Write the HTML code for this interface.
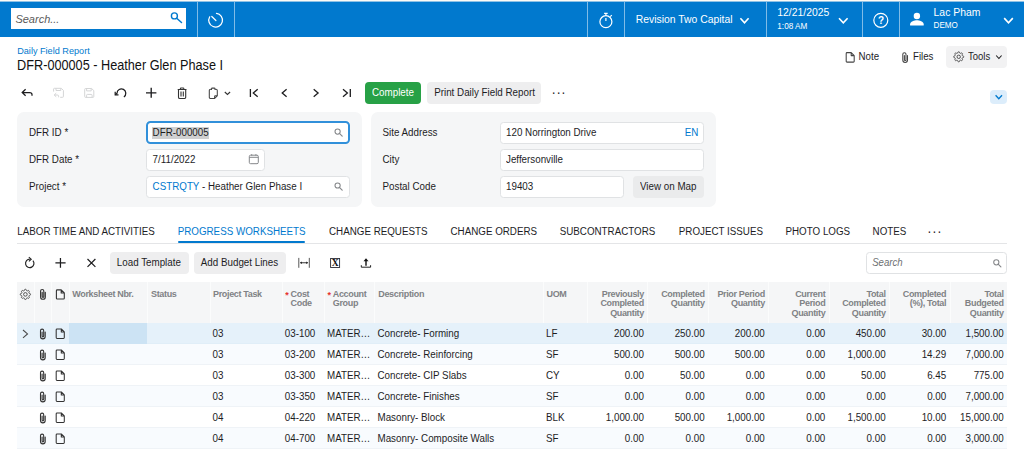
<!DOCTYPE html>
<html><head><meta charset="utf-8"><title>Daily Field Report</title>
<style>
*{box-sizing:border-box;margin:0;padding:0}
html,body{width:1024px;height:460px;overflow:hidden;background:#fff;font-family:"Liberation Sans",sans-serif;color:#1d1d1f;font-size:9.8px}
.abs{position:absolute}
.t{position:absolute;white-space:nowrap}
.hc{position:absolute;white-space:nowrap;font-weight:bold;font-size:9px;letter-spacing:-0.34px;color:#808285;line-height:9.5px}
.hr{text-align:right}
svg{position:absolute;overflow:visible}
</style></head><body>
<div class="abs" style="left:0.00px;top:0.00px;width:1024.00px;height:37.00px;background:linear-gradient(#fdfbf6 0,#fdfbf6 1px,#8fc2e6 1px,#8fc2e6 2px,#0179ce 2px)"></div>
<div class="abs" style="left:10.60px;top:8.00px;width:175.40px;height:21.00px;background:#fff"></div>
<div class="t" style="left:15.40px;top:13px;line-height:12px;font-size:11px;color:#5a5a5a;transform:scaleY(1.03);transform-origin:0 10px;font-style:italic">Search...</div>
<div class="abs" style="left:197.00px;top:2.00px;width:1.00px;height:35.00px;background:rgba(255,255,255,.5)"></div>
<div class="abs" style="left:234.00px;top:2.00px;width:1.00px;height:35.00px;background:rgba(255,255,255,.5)"></div>
<div class="abs" style="left:587.00px;top:2.00px;width:1.00px;height:35.00px;background:rgba(255,255,255,.5)"></div>
<div class="abs" style="left:624.00px;top:2.00px;width:1.00px;height:35.00px;background:rgba(255,255,255,.5)"></div>
<div class="abs" style="left:766.00px;top:2.00px;width:1.00px;height:35.00px;background:rgba(255,255,255,.5)"></div>
<div class="abs" style="left:862.00px;top:2.00px;width:1.00px;height:35.00px;background:rgba(255,255,255,.5)"></div>
<div class="abs" style="left:899.00px;top:2.00px;width:1.00px;height:35.00px;background:rgba(255,255,255,.5)"></div>
<svg style="left:0;top:0" width="1024" height="460" viewBox="0 0 1024 460"><circle cx="174.4" cy="15.9" r="3" fill="none" stroke="#0179ce" stroke-width="1.4"/><path d="M176.7 18.3L181.5 22.5" fill="none" stroke="#0179ce" stroke-width="1.5" stroke-linecap="round"/></svg>
<svg style="left:0;top:0" width="1024" height="460" viewBox="0 0 1024 460"><path d="M216.5 13.4A6.85 6.85 0 1 1 209.7 16.8" fill="none" stroke="#fff" stroke-width="1.25" stroke-linecap="round"/><path d="M215.9 20.5L211.8 16.5" fill="none" stroke="#fff" stroke-width="1.25" stroke-linecap="round"/></svg>
<svg style="left:0;top:0" width="1024" height="460" viewBox="0 0 1024 460"><circle cx="605.9" cy="21.7" r="6" fill="none" stroke="#fff" stroke-width="1.2"/><path d="M604.1 13.3h3.6M605.9 13.3v2.2M605.9 18v3M610.3 16.7l1.5-1.6" fill="none" stroke="#fff" stroke-width="1.2" /></svg>
<div class="t" style="left:635.70px;top:14px;line-height:11px;font-size:10.4px;color:#fff;transform:scaleY(1.03);transform-origin:0 9px;">Revision Two Capital</div>
<svg style="left:0;top:0" width="1024" height="460" viewBox="0 0 1024 460"><path d="M740.40 18.20L744.50 22.80L748.60 18.20" fill="none" stroke="#fff" stroke-width="1.6"/></svg>
<div class="t" style="left:777.30px;top:7px;line-height:11px;font-size:10.4px;color:#fff;transform:scaleY(1.03);transform-origin:0 9px;">12/21/2025</div>
<div class="t" style="left:777.30px;top:22px;line-height:9px;font-size:8.2px;color:#fff;transform:scaleY(1.07);transform-origin:0 7px;">1:08 AM</div>
<svg style="left:0;top:0" width="1024" height="460" viewBox="0 0 1024 460"><path d="M839.00 18.20L843.30 22.80L847.60 18.20" fill="none" stroke="#fff" stroke-width="1.6"/></svg>
<svg style="left:0;top:0" width="1024" height="460" viewBox="0 0 1024 460"><circle cx="880.8" cy="20.3" r="7" fill="none" stroke="#fff" stroke-width="1.2"/></svg>
<div class="t" style="left:877.90px;top:15px;line-height:11px;font-size:10px;color:#fff;font-weight:bold">?</div>
<svg style="left:0;top:0" width="1024" height="460" viewBox="0 0 1024 460"><circle cx="916.9" cy="16" r="3.2" fill="#fff"/><path d="M910.1 25.6v-1.4c0-2.6 4.5-3.9 6.8-3.9s6.8 1.3 6.8 3.9v1.4z" fill="#fff"/></svg>
<div class="t" style="left:933.60px;top:7px;line-height:11px;font-size:10.4px;color:#fff;transform:scaleY(1.03);transform-origin:0 9px;">Lac Pham</div>
<div class="t" style="left:933.60px;top:21px;line-height:9px;font-size:8.1px;color:#fff;transform:scaleY(1.07);transform-origin:0 7px;">DEMO</div>
<svg style="left:0;top:0" width="1024" height="460" viewBox="0 0 1024 460"><path d="M1004.20 18.10L1008.50 22.90L1012.80 18.10" fill="none" stroke="#fff" stroke-width="1.6"/></svg>
<div class="t" style="left:17.20px;top:46px;line-height:10px;font-size:9.15px;color:#0179ce;transform:scaleY(1.08);transform-origin:0 8px;">Daily Field Report</div>
<div class="t" style="left:17.10px;top:59px;line-height:14px;font-size:12.7px;color:#111;transform:scaleY(1.08);transform-origin:0 11px;">DFR-000005 - Heather Glen Phase I</div>
<div class="t" style="left:858.60px;top:51px;line-height:11px;font-size:9.7px;color:#1d1d1f;transform:scaleY(1.08);transform-origin:0 9px;">Note</div>
<div class="t" style="left:913.00px;top:51px;line-height:11px;font-size:9.7px;color:#1d1d1f;transform:scaleY(1.08);transform-origin:0 9px;">Files</div>
<div class="abs" style="left:946.40px;top:45.60px;width:60.70px;height:22.50px;background:#f2f2f3;border-radius:4px"></div>
<div class="t" style="left:968.00px;top:51px;line-height:11px;font-size:9.5px;color:#1d1d1f;transform:scaleY(1.08);transform-origin:0 9px;">Tools</div>
<svg style="left:0;top:0" width="1024" height="460" viewBox="0 0 1024 460"><path d="M996.20 55.50L998.90 58.50L1001.60 55.50" fill="none" stroke="#1d1d1f" stroke-width="1.1"/></svg>
<div class="abs" style="left:365.20px;top:81.60px;width:55.80px;height:22.30px;background:#27a146;border-radius:4px"></div>
<div class="t" style="left:372.00px;top:87px;line-height:11px;font-size:9.8px;color:#fff;transform:scaleY(1.08);transform-origin:0 9px;">Complete</div>
<div class="abs" style="left:426.60px;top:81.60px;width:114.90px;height:22.30px;background:#eeeeef;border-radius:4px"></div>
<div class="t" style="left:434.20px;top:87px;line-height:11px;font-size:9.8px;color:#1d1d1f;transform:scaleY(1.08);transform-origin:0 9px;">Print Daily Field Report</div>
<div class="abs" style="left:990.40px;top:90.00px;width:16.70px;height:13.80px;background:#dcedfb;border-radius:4px"></div>
<svg style="left:0;top:0" width="1024" height="460" viewBox="0 0 1024 460"><path d="M995.60 95.20L998.80 98.80L1002.00 95.20" fill="none" stroke="#0179ce" stroke-width="1.3"/></svg>
<svg style="left:0;top:0" width="1024" height="460" viewBox="0 0 1024 460"><path d="M25.6 89.3L22.2 92.5L25.6 95.7M22.4 92.5H29.6Q32 92.5 32 94.6V95.8" fill="none" stroke="#1d1d1f" stroke-width="1.25" /><path d="M53.6 91.6V89.1a0.8 0.8 0 0 1 0.8 -0.8H61.3L63.4 90.4V96.5a0.8 0.8 0 0 1 -0.8 0.8H60.2M56 88.4V90.5H60.8V88.4" fill="none" stroke="#d4d5d6" stroke-width="1.0" /><path d="M56.2 93.2L54.2 95L56.2 96.8M54.3 95H57.4Q58.6 95 58.6 96.2V97.3" fill="none" stroke="#d4d5d6" stroke-width="1.0" /><path d="M85.6 88.5H91.6L93.8 90.6V96.5a0.9 0.9 0 0 1 -0.9 0.9H85.6a0.9 0.9 0 0 1 -0.9 -0.9V89.4a0.9 0.9 0 0 1 0.9 -0.9ZM86.6 88.5V90.9H91.2V88.5M86.6 97.4V95.3a0.9 0.9 0 0 1 0.9 -0.9H91.2a0.9 0.9 0 0 1 0.9 0.9V97.4" fill="none" stroke="#d4d5d6" stroke-width="1.0" /><path d="M115.4 94.7L117 93.2A4.4 4.4 0 1 1 123.9 96.9" fill="none" stroke="#1d1d1f" stroke-width="1.25" /><path d="M115.2 91.7V94.9H118.5" fill="none" stroke="#1d1d1f" stroke-width="1.25" /><path d="M146 92.85H156.4M151.2 87.8V97.7" fill="none" stroke="#1d1d1f" stroke-width="1.35" /><path d="M177.7 89.5H186.5M180.4 89.3V88.6a0.6 0.6 0 0 1 0.6 -0.6H183.2a0.6 0.6 0 0 1 0.6 0.6V89.3M178.5 89.6V97.2a1.3 1.3 0 0 0 1.3 1.3H184.4a1.3 1.3 0 0 0 1.3 -1.3V89.6M181 91.4V96.4M183.3 91.4V96.4" fill="none" stroke="#333" stroke-width="1.1" /><path d="M211.6 89.3H210.6a1.3 1.3 0 0 0 -1.3 1.3V97.2a1.3 1.3 0 0 0 1.3 1.3H214.6L217.3 95.7V90.6a1.3 1.3 0 0 0 -1.3 -1.3H215M211.5 89.9V88.9a0.8 0.8 0 0 1 0.8 -0.8H214.2a0.8 0.8 0 0 1 0.8 0.8V89.9M214.6 98.4V96.6a0.8 0.8 0 0 1 0.8 -0.8H217.2" fill="none" stroke="#444" stroke-width="1.05" /><path d="M224.8 92L227.45 94.5L230.1 92" fill="none" stroke="#333" stroke-width="1.1" /><path d="M250.4 88.9V97.1M257.7 89.2L253.3 93L257.7 96.8" fill="none" stroke="#1d1d1f" stroke-width="1.3" /><path d="M286.6 89.2L282.2 93L286.6 96.8" fill="none" stroke="#1d1d1f" stroke-width="1.3" /><path d="M313.7 89.2L318.1 93L313.7 96.8" fill="none" stroke="#1d1d1f" stroke-width="1.3" /><path d="M343 89.2L347.4 93L343 96.8M350.3 88.9V97.1" fill="none" stroke="#1d1d1f" stroke-width="1.3" /><path d="M851.20 52.60H847.00a0.8 0.8 0 0 0 -0.8 0.8V61.30a0.8 0.8 0 0 0 0.8 0.8H853.40a0.8 0.8 0 0 0 0.8 -0.8V55.60ZM851.20 52.60V55.60H854.20" fill="none" stroke="#444" stroke-width="1.05" stroke-linejoin="round"/><path d="M907.50 55.60v4.5a2.35 2.35 0 0 1 -4.7 0v-5.8a1.6 1.6 0 0 1 3.2 0v5.4a0.8 0.8 0 0 1 -1.6 0v-4.1" fill="none" stroke="#444" stroke-width="1.05" stroke-linecap="round"/><path d="M963.70 56.80L963.68 57.13L963.55 57.44L963.02 57.66L962.47 57.81L962.31 58.03L962.21 58.25L962.12 58.49L962.08 58.75L962.36 59.24L962.58 59.78L962.45 60.09L962.24 60.34L961.99 60.55L961.68 60.68L961.14 60.46L960.65 60.18L960.39 60.22L960.15 60.31L959.93 60.41L959.71 60.57L959.56 61.12L959.34 61.65L959.03 61.78L958.70 61.80L958.37 61.78L958.06 61.65L957.84 61.12L957.69 60.57L957.47 60.41L957.25 60.31L957.01 60.22L956.75 60.18L956.26 60.46L955.72 60.68L955.41 60.55L955.16 60.34L954.95 60.09L954.82 59.78L955.04 59.24L955.32 58.75L955.28 58.49L955.19 58.25L955.09 58.03L954.93 57.81L954.38 57.66L953.85 57.44L953.72 57.13L953.70 56.80L953.72 56.47L953.85 56.16L954.38 55.94L954.93 55.79L955.09 55.57L955.19 55.35L955.28 55.11L955.32 54.85L955.04 54.36L954.82 53.82L954.95 53.51L955.16 53.26L955.41 53.05L955.72 52.92L956.26 53.14L956.75 53.42L957.01 53.38L957.25 53.29L957.47 53.19L957.69 53.03L957.84 52.48L958.06 51.95L958.37 51.82L958.70 51.80L959.03 51.82L959.34 51.95L959.56 52.48L959.71 53.03L959.93 53.19L960.15 53.29L960.39 53.38L960.65 53.42L961.14 53.14L961.68 52.92L961.99 53.05L962.24 53.26L962.45 53.51L962.58 53.82L962.36 54.36L962.08 54.85L962.12 55.11L962.21 55.35L962.31 55.57L962.47 55.79L963.02 55.94L963.55 56.16L963.68 56.47Z" fill="none" stroke="#4a4a4a" stroke-width="0.95" stroke-linejoin="round"/><circle cx="958.7" cy="56.8" r="1.7" fill="none" stroke="#4a4a4a" stroke-width="0.95"/></svg>

<div class="abs" style="left:17.00px;top:112.00px;width:345.00px;height:95.00px;background:#f5f6f7;border-radius:7px"></div>
<div class="abs" style="left:370.50px;top:112.00px;width:345.10px;height:95.00px;background:#f5f6f7;border-radius:7px"></div>
<div class="abs" style="left:145.90px;top:121.00px;width:204.60px;height:23.20px;background:#fff;border:2px solid #3190da;border-radius:4.5px"></div>
<div class="abs" style="left:146.20px;top:148.50px;width:119.30px;height:22.00px;background:#fff;border:1px solid #e0e2e4;border-radius:3.5px"></div>
<div class="abs" style="left:146.20px;top:175.50px;width:204.00px;height:22.00px;background:#fff;border:1px solid #e0e2e4;border-radius:3.5px"></div>
<div class="abs" style="left:499.60px;top:121.50px;width:204.00px;height:22.00px;background:#fff;border:1px solid #e0e2e4;border-radius:3.5px"></div>
<div class="abs" style="left:499.60px;top:148.50px;width:204.00px;height:22.00px;background:#fff;border:1px solid #e0e2e4;border-radius:3.5px"></div>
<div class="abs" style="left:499.60px;top:175.50px;width:124.70px;height:22.00px;background:#fff;border:1px solid #e0e2e4;border-radius:3.5px"></div>
<div class="abs" style="left:632.90px;top:175.50px;width:70.70px;height:22.00px;background:#eaebec;border-radius:4px"></div>
<div class="t" style="left:29.00px;top:127px;line-height:11px;font-size:9.8px;color:#1d1d1f;transform:scaleY(1.08);transform-origin:0 9px;">DFR ID *</div>
<div class="t" style="left:382.50px;top:127px;line-height:11px;font-size:9.8px;color:#1d1d1f;transform:scaleY(1.08);transform-origin:0 9px;">Site Address</div>
<div class="t" style="left:29.00px;top:154px;line-height:11px;font-size:9.8px;color:#1d1d1f;transform:scaleY(1.08);transform-origin:0 9px;">DFR Date *</div>
<div class="t" style="left:382.50px;top:154px;line-height:11px;font-size:9.8px;color:#1d1d1f;transform:scaleY(1.08);transform-origin:0 9px;">City</div>
<div class="t" style="left:29.00px;top:181px;line-height:11px;font-size:9.8px;color:#1d1d1f;transform:scaleY(1.08);transform-origin:0 9px;">Project *</div>
<div class="t" style="left:382.50px;top:181px;line-height:11px;font-size:9.8px;color:#1d1d1f;transform:scaleY(1.08);transform-origin:0 9px;">Postal Code</div>
<div class="abs" style="left:152.20px;top:126.80px;width:56.60px;height:12.00px;background:#cfd0d1"></div>
<div class="t" style="left:152.60px;top:127px;line-height:11px;font-size:9.8px;color:#1d1d1f;transform:scaleY(1.08);transform-origin:0 9px;">DFR-000005</div>
<div class="t" style="left:152.60px;top:154px;line-height:11px;font-size:9.8px;color:#1d1d1f;transform:scaleY(1.08);transform-origin:0 9px;">7/11/2022</div>
<div class="t" style="left:152.60px;top:181px;line-height:11px;font-size:9.8px;color:#1d1d1f;transform:scaleY(1.08);transform-origin:0 9px;"><span style="color:#0179ce">CSTRQTY</span> - Heather Glen Phase I</div>
<div class="t" style="left:506.00px;top:127px;line-height:11px;font-size:9.8px;color:#1d1d1f;transform:scaleY(1.08);transform-origin:0 9px;">120 Norrington Drive</div>
<div class="t" style="left:684.80px;top:127px;line-height:11px;font-size:9.8px;color:#0179ce;transform:scaleY(1.08);transform-origin:0 9px;">EN</div>
<div class="t" style="left:506.00px;top:154px;line-height:11px;font-size:9.8px;color:#1d1d1f;transform:scaleY(1.08);transform-origin:0 9px;">Jeffersonville</div>
<div class="t" style="left:506.00px;top:181px;line-height:11px;font-size:9.8px;color:#1d1d1f;transform:scaleY(1.08);transform-origin:0 9px;">19403</div>
<div class="t" style="left:640.00px;top:181px;line-height:11px;font-size:9.8px;color:#1d1d1f;transform:scaleY(1.08);transform-origin:0 9px;">View on Map</div>
<svg style="left:0;top:0" width="1024" height="460" viewBox="0 0 1024 460"><circle cx="337.6" cy="131.6" r="2.6" fill="none" stroke="#85878a" stroke-width="1.05"/><path d="M339.44 133.44L342.20 136.20" fill="none" stroke="#85878a" stroke-width="1.1500000000000001" stroke-linecap="round"/><circle cx="337.6" cy="185.5" r="2.6" fill="none" stroke="#85878a" stroke-width="1.05"/><path d="M339.44 187.34L342.20 190.10" fill="none" stroke="#85878a" stroke-width="1.1500000000000001" stroke-linecap="round"/><path d="M250.6 155.2H257a1.3 1.3 0 0 1 1.3 1.3V162.4a1.3 1.3 0 0 1 -1.3 1.3H250.6a1.3 1.3 0 0 1 -1.3 -1.3V156.5a1.3 1.3 0 0 1 1.3 -1.3ZM249.3 157.3H258.3M251.7 154.2V155.6M255.9 154.2V155.6" fill="none" stroke="#85878a" stroke-width="1.0" /></svg>

<div class="t" style="left:17.30px;top:226px;line-height:11px;font-size:9.8px;color:#1d1d1f;transform:scaleY(1.08);transform-origin:0 9px;">LABOR TIME AND ACTIVITIES</div>
<div class="t" style="left:177.70px;top:226px;line-height:11px;font-size:9.8px;color:#0179ce;transform:scaleY(1.08);transform-origin:0 9px;">PROGRESS WORKSHEETS</div>
<div class="t" style="left:329.00px;top:226px;line-height:11px;font-size:9.8px;color:#1d1d1f;transform:scaleY(1.08);transform-origin:0 9px;">CHANGE REQUESTS</div>
<div class="t" style="left:450.50px;top:226px;line-height:11px;font-size:9.8px;color:#1d1d1f;transform:scaleY(1.08);transform-origin:0 9px;">CHANGE ORDERS</div>
<div class="t" style="left:559.70px;top:226px;line-height:11px;font-size:9.8px;color:#1d1d1f;transform:scaleY(1.08);transform-origin:0 9px;">SUBCONTRACTORS</div>
<div class="t" style="left:678.80px;top:226px;line-height:11px;font-size:9.8px;color:#1d1d1f;transform:scaleY(1.08);transform-origin:0 9px;">PROJECT ISSUES</div>
<div class="t" style="left:785.50px;top:226px;line-height:11px;font-size:9.8px;color:#1d1d1f;transform:scaleY(1.08);transform-origin:0 9px;">PHOTO LOGS</div>
<div class="t" style="left:872.60px;top:226px;line-height:11px;font-size:9.8px;color:#1d1d1f;transform:scaleY(1.08);transform-origin:0 9px;">NOTES</div>
<div class="t" style="left:927.30px;top:224px;line-height:15px;font-size:13px;color:#1d1d1f;transform:scaleY(1.08);transform-origin:0 12px;letter-spacing:0.6px">···</div>
<div class="t" style="left:551.50px;top:85px;line-height:15px;font-size:13px;color:#1d1d1f;transform:scaleY(1.08);transform-origin:0 12px;letter-spacing:0.6px">···</div>
<div class="abs" style="left:17.00px;top:243.00px;width:990.00px;height:1.00px;background:#e4e5e7"></div>
<div class="abs" style="left:177.70px;top:241.00px;width:127.80px;height:2.20px;background:#0179ce;border-radius:1px"></div>
<div class="abs" style="left:109.60px;top:251.50px;width:79.00px;height:22.50px;background:#eeeeef;border-radius:4px"></div>
<div class="t" style="left:116.80px;top:257px;line-height:11px;font-size:9.8px;color:#1d1d1f;transform:scaleY(1.08);transform-origin:0 9px;">Load Template</div>
<div class="abs" style="left:193.60px;top:251.50px;width:92.00px;height:22.50px;background:#eeeeef;border-radius:4px"></div>
<div class="t" style="left:200.80px;top:257px;line-height:11px;font-size:9.8px;color:#1d1d1f;transform:scaleY(1.08);transform-origin:0 9px;">Add Budget Lines</div>
<div class="abs" style="left:866.20px;top:251.60px;width:140.40px;height:22.40px;background:#fff;border:1px solid #e0e2e4;border-radius:3.5px"></div>
<div class="t" style="left:872.20px;top:257px;line-height:11px;font-size:9.6px;color:#6d6f72;transform:scaleY(1.08);transform-origin:0 9px;font-style:italic">Search</div>
<svg style="left:0;top:0" width="1024" height="460" viewBox="0 0 1024 460"><path d="M32.9 260.6A4.2 4.2 0 1 1 29.9 259.2" fill="none" stroke="#222" stroke-width="1.15" /><path d="M28.8 257.2L31.2 259.2L28.9 261.3" fill="none" stroke="#222" stroke-width="1.1" /><path d="M55.4 262.9H65.6M60.45 258.1V267.8" fill="none" stroke="#1d1d1f" stroke-width="1.25" /><path d="M87.5 259L95.4 266.9M95.4 259L87.5 266.9" fill="none" stroke="#1d1d1f" stroke-width="1.2" /><path d="M298.8 257.9V267.8M309.3 257.9V267.8" fill="none" stroke="#444" stroke-width="0.9" /><path d="M300.4 262.75H307.7" fill="none" stroke="#222" stroke-width="0.9" /><path d="M299.9 262.75L301.9 261.4V264.1ZM308.2 262.75L306.2 261.4V264.1Z" fill="#222" stroke="none" stroke-width="0" /><rect x="330.6" y="258.5" width="9" height="9" fill="#fff" stroke="#2a2a33" stroke-width="0.9"/><path d="M366 260.5V265.8" fill="none" stroke="#111" stroke-width="1.4" /><path d="M366 258.2L368.5 261.3H363.5Z" fill="#111" stroke="none" stroke-width="0" /><path d="M361.3 265.2V267.2H370.6V265.2" fill="none" stroke="#222" stroke-width="1.0" /><circle cx="996.3" cy="262.3" r="2.6" fill="none" stroke="#85878a" stroke-width="1.05"/><path d="M998.14 264.14L1000.90 266.90" fill="none" stroke="#85878a" stroke-width="1.1500000000000001" stroke-linecap="round"/></svg>

<div class="t" style="left:331.65px;top:257px;line-height:11px;font-size:9.6px;color:#111;font-family:'Liberation Serif',serif;font-weight:bold">X</div>
<div class="abs" style="left:17.00px;top:282.20px;width:990.00px;height:40.80px;background:#f5f6f7"></div>
<div class="abs" style="left:33.60px;top:282.20px;width:1.00px;height:40.80px;background:#fbfcfc"></div>
<div class="abs" style="left:51.00px;top:282.20px;width:1.00px;height:40.80px;background:#fbfcfc"></div>
<div class="abs" style="left:68.80px;top:282.20px;width:1.00px;height:40.80px;background:#fbfcfc"></div>
<div class="abs" style="left:147.00px;top:282.20px;width:1.00px;height:40.80px;background:#fbfcfc"></div>
<div class="abs" style="left:210.00px;top:282.20px;width:1.00px;height:40.80px;background:#fbfcfc"></div>
<div class="abs" style="left:282.40px;top:282.20px;width:1.00px;height:40.80px;background:#fbfcfc"></div>
<div class="abs" style="left:323.80px;top:282.20px;width:1.00px;height:40.80px;background:#fbfcfc"></div>
<div class="abs" style="left:374.30px;top:282.20px;width:1.00px;height:40.80px;background:#fbfcfc"></div>
<div class="abs" style="left:543.00px;top:282.20px;width:1.00px;height:40.80px;background:#fbfcfc"></div>
<div class="abs" style="left:587.00px;top:282.20px;width:1.00px;height:40.80px;background:#fbfcfc"></div>
<div class="abs" style="left:647.00px;top:282.20px;width:1.00px;height:40.80px;background:#fbfcfc"></div>
<div class="abs" style="left:708.00px;top:282.20px;width:1.00px;height:40.80px;background:#fbfcfc"></div>
<div class="abs" style="left:768.00px;top:282.20px;width:1.00px;height:40.80px;background:#fbfcfc"></div>
<div class="abs" style="left:828.60px;top:282.20px;width:1.00px;height:40.80px;background:#fbfcfc"></div>
<div class="abs" style="left:889.00px;top:282.20px;width:1.00px;height:40.80px;background:#fbfcfc"></div>
<div class="abs" style="left:949.60px;top:282.20px;width:1.00px;height:40.80px;background:#fbfcfc"></div>
<div class="hc" style="left:72.30px;top:289.90px">Worksheet Nbr.</div>
<div class="hc" style="left:151.00px;top:289.90px">Status</div>
<div class="hc" style="left:213.00px;top:289.90px">Project Task</div>
<div class="hc" style="left:290.60px;top:289.90px">Cost<br>Code</div>
<div class="hc" style="left:332.80px;top:289.90px">Account<br>Group</div>
<div class="hc" style="left:378.30px;top:289.90px">Description</div>
<div class="hc" style="left:546.50px;top:289.90px">UOM</div>
<div class="t" style="left:285.30px;top:290px;line-height:10px;font-size:9px;color:#e5322d;transform:scaleY(1.08);transform-origin:0 8px;font-weight:bold">*</div>
<div class="t" style="left:327.40px;top:290px;line-height:10px;font-size:9px;color:#e5322d;transform:scaleY(1.08);transform-origin:0 8px;font-weight:bold">*</div>
<div class="hc hr" style="right:380.10px;top:289.90px">Previously<br>Completed<br>Quantity</div>
<div class="hc hr" style="right:319.40px;top:289.90px">Completed<br>Quantity</div>
<div class="hc hr" style="right:259.20px;top:289.90px">Prior Period<br>Quantity</div>
<div class="hc hr" style="right:198.70px;top:289.90px">Current<br>Period<br>Quantity</div>
<div class="hc hr" style="right:138.40px;top:289.90px">Total<br>Completed<br>Quantity</div>
<div class="hc hr" style="right:77.80px;top:289.90px">Completed<br>(%), Total</div>
<div class="hc hr" style="right:20.40px;top:289.90px">Total<br>Budgeted<br>Quantity</div>
<div class="abs" style="left:17.00px;top:323.00px;width:990.00px;height:21.00px;background:#e5f1fa;border-bottom:1px solid #e0eef8"></div>
<div class="abs" style="left:69.30px;top:323.00px;width:77.70px;height:20.50px;background:#cce3f4"></div>
<div class="t" style="left:212.50px;top:328px;line-height:11px;font-size:9.8px;color:#1d1d1f;transform:scaleY(1.08);transform-origin:0 9px;">03</div>
<div class="t" style="left:284.80px;top:328px;line-height:11px;font-size:9.8px;color:#1d1d1f;transform:scaleY(1.08);transform-origin:0 9px;">03-100</div>
<div class="t" style="left:327.00px;top:328px;line-height:11px;font-size:9.8px;color:#1d1d1f;transform:scaleY(1.08);transform-origin:0 9px;">MATER…</div>
<div class="t" style="left:377.50px;top:328px;line-height:11px;font-size:9.8px;color:#1d1d1f;transform:scaleY(1.08);transform-origin:0 9px;">Concrete- Forming</div>
<div class="t" style="left:546.00px;top:328px;line-height:11px;font-size:9.8px;color:#1d1d1f;transform:scaleY(1.08);transform-origin:0 9px;">LF</div>
<div class="t" style="right:380.10px;top:328px;line-height:11px;font-size:9.8px;color:#1d1d1f;transform:scaleY(1.08);transform-origin:0 9px;">200.00</div>
<div class="t" style="right:319.40px;top:328px;line-height:11px;font-size:9.8px;color:#1d1d1f;transform:scaleY(1.08);transform-origin:0 9px;">250.00</div>
<div class="t" style="right:259.20px;top:328px;line-height:11px;font-size:9.8px;color:#1d1d1f;transform:scaleY(1.08);transform-origin:0 9px;">200.00</div>
<div class="t" style="right:198.70px;top:328px;line-height:11px;font-size:9.8px;color:#1d1d1f;transform:scaleY(1.08);transform-origin:0 9px;">0.00</div>
<div class="t" style="right:138.40px;top:328px;line-height:11px;font-size:9.8px;color:#1d1d1f;transform:scaleY(1.08);transform-origin:0 9px;">450.00</div>
<div class="t" style="right:77.80px;top:328px;line-height:11px;font-size:9.8px;color:#1d1d1f;transform:scaleY(1.08);transform-origin:0 9px;">30.00</div>
<div class="t" style="right:20.40px;top:328px;line-height:11px;font-size:9.8px;color:#1d1d1f;transform:scaleY(1.08);transform-origin:0 9px;">1,500.00</div>
<div class="abs" style="left:17.00px;top:344.00px;width:990.00px;height:21.00px;background:#f8fbfe;border-bottom:1px solid #eff3f7"></div>
<div class="t" style="left:212.50px;top:349px;line-height:11px;font-size:9.8px;color:#1d1d1f;transform:scaleY(1.08);transform-origin:0 9px;">03</div>
<div class="t" style="left:284.80px;top:349px;line-height:11px;font-size:9.8px;color:#1d1d1f;transform:scaleY(1.08);transform-origin:0 9px;">03-200</div>
<div class="t" style="left:327.00px;top:349px;line-height:11px;font-size:9.8px;color:#1d1d1f;transform:scaleY(1.08);transform-origin:0 9px;">MATER…</div>
<div class="t" style="left:377.50px;top:349px;line-height:11px;font-size:9.8px;color:#1d1d1f;transform:scaleY(1.08);transform-origin:0 9px;">Concrete- Reinforcing</div>
<div class="t" style="left:546.00px;top:349px;line-height:11px;font-size:9.8px;color:#1d1d1f;transform:scaleY(1.08);transform-origin:0 9px;">SF</div>
<div class="t" style="right:380.10px;top:349px;line-height:11px;font-size:9.8px;color:#1d1d1f;transform:scaleY(1.08);transform-origin:0 9px;">500.00</div>
<div class="t" style="right:319.40px;top:349px;line-height:11px;font-size:9.8px;color:#1d1d1f;transform:scaleY(1.08);transform-origin:0 9px;">500.00</div>
<div class="t" style="right:259.20px;top:349px;line-height:11px;font-size:9.8px;color:#1d1d1f;transform:scaleY(1.08);transform-origin:0 9px;">500.00</div>
<div class="t" style="right:198.70px;top:349px;line-height:11px;font-size:9.8px;color:#1d1d1f;transform:scaleY(1.08);transform-origin:0 9px;">0.00</div>
<div class="t" style="right:138.40px;top:349px;line-height:11px;font-size:9.8px;color:#1d1d1f;transform:scaleY(1.08);transform-origin:0 9px;">1,000.00</div>
<div class="t" style="right:77.80px;top:349px;line-height:11px;font-size:9.8px;color:#1d1d1f;transform:scaleY(1.08);transform-origin:0 9px;">14.29</div>
<div class="t" style="right:20.40px;top:349px;line-height:11px;font-size:9.8px;color:#1d1d1f;transform:scaleY(1.08);transform-origin:0 9px;">7,000.00</div>
<div class="abs" style="left:17.00px;top:365.00px;width:990.00px;height:21.00px;background:#fff;border-bottom:1px solid #eff3f7"></div>
<div class="t" style="left:212.50px;top:370px;line-height:11px;font-size:9.8px;color:#1d1d1f;transform:scaleY(1.08);transform-origin:0 9px;">03</div>
<div class="t" style="left:284.80px;top:370px;line-height:11px;font-size:9.8px;color:#1d1d1f;transform:scaleY(1.08);transform-origin:0 9px;">03-300</div>
<div class="t" style="left:327.00px;top:370px;line-height:11px;font-size:9.8px;color:#1d1d1f;transform:scaleY(1.08);transform-origin:0 9px;">MATER…</div>
<div class="t" style="left:377.50px;top:370px;line-height:11px;font-size:9.8px;color:#1d1d1f;transform:scaleY(1.08);transform-origin:0 9px;">Concrete- CIP Slabs</div>
<div class="t" style="left:546.00px;top:370px;line-height:11px;font-size:9.8px;color:#1d1d1f;transform:scaleY(1.08);transform-origin:0 9px;">CY</div>
<div class="t" style="right:380.10px;top:370px;line-height:11px;font-size:9.8px;color:#1d1d1f;transform:scaleY(1.08);transform-origin:0 9px;">0.00</div>
<div class="t" style="right:319.40px;top:370px;line-height:11px;font-size:9.8px;color:#1d1d1f;transform:scaleY(1.08);transform-origin:0 9px;">50.00</div>
<div class="t" style="right:259.20px;top:370px;line-height:11px;font-size:9.8px;color:#1d1d1f;transform:scaleY(1.08);transform-origin:0 9px;">0.00</div>
<div class="t" style="right:198.70px;top:370px;line-height:11px;font-size:9.8px;color:#1d1d1f;transform:scaleY(1.08);transform-origin:0 9px;">0.00</div>
<div class="t" style="right:138.40px;top:370px;line-height:11px;font-size:9.8px;color:#1d1d1f;transform:scaleY(1.08);transform-origin:0 9px;">50.00</div>
<div class="t" style="right:77.80px;top:370px;line-height:11px;font-size:9.8px;color:#1d1d1f;transform:scaleY(1.08);transform-origin:0 9px;">6.45</div>
<div class="t" style="right:20.40px;top:370px;line-height:11px;font-size:9.8px;color:#1d1d1f;transform:scaleY(1.08);transform-origin:0 9px;">775.00</div>
<div class="abs" style="left:17.00px;top:386.00px;width:990.00px;height:21.00px;background:#f8fbfe;border-bottom:1px solid #eff3f7"></div>
<div class="t" style="left:212.50px;top:391px;line-height:11px;font-size:9.8px;color:#1d1d1f;transform:scaleY(1.08);transform-origin:0 9px;">03</div>
<div class="t" style="left:284.80px;top:391px;line-height:11px;font-size:9.8px;color:#1d1d1f;transform:scaleY(1.08);transform-origin:0 9px;">03-350</div>
<div class="t" style="left:327.00px;top:391px;line-height:11px;font-size:9.8px;color:#1d1d1f;transform:scaleY(1.08);transform-origin:0 9px;">MATER…</div>
<div class="t" style="left:377.50px;top:391px;line-height:11px;font-size:9.8px;color:#1d1d1f;transform:scaleY(1.08);transform-origin:0 9px;">Concrete- Finishes</div>
<div class="t" style="left:546.00px;top:391px;line-height:11px;font-size:9.8px;color:#1d1d1f;transform:scaleY(1.08);transform-origin:0 9px;">SF</div>
<div class="t" style="right:380.10px;top:391px;line-height:11px;font-size:9.8px;color:#1d1d1f;transform:scaleY(1.08);transform-origin:0 9px;">0.00</div>
<div class="t" style="right:319.40px;top:391px;line-height:11px;font-size:9.8px;color:#1d1d1f;transform:scaleY(1.08);transform-origin:0 9px;">0.00</div>
<div class="t" style="right:259.20px;top:391px;line-height:11px;font-size:9.8px;color:#1d1d1f;transform:scaleY(1.08);transform-origin:0 9px;">0.00</div>
<div class="t" style="right:198.70px;top:391px;line-height:11px;font-size:9.8px;color:#1d1d1f;transform:scaleY(1.08);transform-origin:0 9px;">0.00</div>
<div class="t" style="right:138.40px;top:391px;line-height:11px;font-size:9.8px;color:#1d1d1f;transform:scaleY(1.08);transform-origin:0 9px;">0.00</div>
<div class="t" style="right:77.80px;top:391px;line-height:11px;font-size:9.8px;color:#1d1d1f;transform:scaleY(1.08);transform-origin:0 9px;">0.00</div>
<div class="t" style="right:20.40px;top:391px;line-height:11px;font-size:9.8px;color:#1d1d1f;transform:scaleY(1.08);transform-origin:0 9px;">7,000.00</div>
<div class="abs" style="left:17.00px;top:407.00px;width:990.00px;height:21.00px;background:#fff;border-bottom:1px solid #eff3f7"></div>
<div class="t" style="left:212.50px;top:412px;line-height:11px;font-size:9.8px;color:#1d1d1f;transform:scaleY(1.08);transform-origin:0 9px;">04</div>
<div class="t" style="left:284.80px;top:412px;line-height:11px;font-size:9.8px;color:#1d1d1f;transform:scaleY(1.08);transform-origin:0 9px;">04-220</div>
<div class="t" style="left:327.00px;top:412px;line-height:11px;font-size:9.8px;color:#1d1d1f;transform:scaleY(1.08);transform-origin:0 9px;">MATER…</div>
<div class="t" style="left:377.50px;top:412px;line-height:11px;font-size:9.8px;color:#1d1d1f;transform:scaleY(1.08);transform-origin:0 9px;">Masonry- Block</div>
<div class="t" style="left:546.00px;top:412px;line-height:11px;font-size:9.8px;color:#1d1d1f;transform:scaleY(1.08);transform-origin:0 9px;">BLK</div>
<div class="t" style="right:380.10px;top:412px;line-height:11px;font-size:9.8px;color:#1d1d1f;transform:scaleY(1.08);transform-origin:0 9px;">1,000.00</div>
<div class="t" style="right:319.40px;top:412px;line-height:11px;font-size:9.8px;color:#1d1d1f;transform:scaleY(1.08);transform-origin:0 9px;">500.00</div>
<div class="t" style="right:259.20px;top:412px;line-height:11px;font-size:9.8px;color:#1d1d1f;transform:scaleY(1.08);transform-origin:0 9px;">1,000.00</div>
<div class="t" style="right:198.70px;top:412px;line-height:11px;font-size:9.8px;color:#1d1d1f;transform:scaleY(1.08);transform-origin:0 9px;">0.00</div>
<div class="t" style="right:138.40px;top:412px;line-height:11px;font-size:9.8px;color:#1d1d1f;transform:scaleY(1.08);transform-origin:0 9px;">1,500.00</div>
<div class="t" style="right:77.80px;top:412px;line-height:11px;font-size:9.8px;color:#1d1d1f;transform:scaleY(1.08);transform-origin:0 9px;">10.00</div>
<div class="t" style="right:20.40px;top:412px;line-height:11px;font-size:9.8px;color:#1d1d1f;transform:scaleY(1.08);transform-origin:0 9px;">15,000.00</div>
<div class="abs" style="left:17.00px;top:428.00px;width:990.00px;height:21.00px;background:#f8fbfe;border-bottom:1px solid #eff3f7"></div>
<div class="t" style="left:212.50px;top:433px;line-height:11px;font-size:9.8px;color:#1d1d1f;transform:scaleY(1.08);transform-origin:0 9px;">04</div>
<div class="t" style="left:284.80px;top:433px;line-height:11px;font-size:9.8px;color:#1d1d1f;transform:scaleY(1.08);transform-origin:0 9px;">04-700</div>
<div class="t" style="left:327.00px;top:433px;line-height:11px;font-size:9.8px;color:#1d1d1f;transform:scaleY(1.08);transform-origin:0 9px;">MATER…</div>
<div class="t" style="left:377.50px;top:433px;line-height:11px;font-size:9.8px;color:#1d1d1f;transform:scaleY(1.08);transform-origin:0 9px;">Masonry- Composite Walls</div>
<div class="t" style="left:546.00px;top:433px;line-height:11px;font-size:9.8px;color:#1d1d1f;transform:scaleY(1.08);transform-origin:0 9px;">SF</div>
<div class="t" style="right:380.10px;top:433px;line-height:11px;font-size:9.8px;color:#1d1d1f;transform:scaleY(1.08);transform-origin:0 9px;">0.00</div>
<div class="t" style="right:319.40px;top:433px;line-height:11px;font-size:9.8px;color:#1d1d1f;transform:scaleY(1.08);transform-origin:0 9px;">0.00</div>
<div class="t" style="right:259.20px;top:433px;line-height:11px;font-size:9.8px;color:#1d1d1f;transform:scaleY(1.08);transform-origin:0 9px;">0.00</div>
<div class="t" style="right:198.70px;top:433px;line-height:11px;font-size:9.8px;color:#1d1d1f;transform:scaleY(1.08);transform-origin:0 9px;">0.00</div>
<div class="t" style="right:138.40px;top:433px;line-height:11px;font-size:9.8px;color:#1d1d1f;transform:scaleY(1.08);transform-origin:0 9px;">0.00</div>
<div class="t" style="right:77.80px;top:433px;line-height:11px;font-size:9.8px;color:#1d1d1f;transform:scaleY(1.08);transform-origin:0 9px;">0.00</div>
<div class="t" style="right:20.40px;top:433px;line-height:11px;font-size:9.8px;color:#1d1d1f;transform:scaleY(1.08);transform-origin:0 9px;">3,000.00</div>
<svg style="left:0;top:0" width="1024" height="460" viewBox="0 0 1024 460"><path d="M30.50 294.40L30.48 294.73L30.35 295.05L29.81 295.28L29.27 295.44L29.10 295.66L29.00 295.89L28.91 296.13L28.87 296.40L29.14 296.90L29.36 297.44L29.23 297.75L29.01 298.01L28.75 298.23L28.44 298.36L27.90 298.14L27.40 297.87L27.13 297.91L26.89 298.00L26.66 298.10L26.44 298.27L26.28 298.81L26.05 299.35L25.73 299.48L25.40 299.50L25.07 299.48L24.75 299.35L24.52 298.81L24.36 298.27L24.14 298.10L23.91 298.00L23.67 297.91L23.40 297.87L22.90 298.14L22.36 298.36L22.05 298.23L21.79 298.01L21.57 297.75L21.44 297.44L21.66 296.90L21.93 296.40L21.89 296.13L21.80 295.89L21.70 295.66L21.53 295.44L20.99 295.28L20.45 295.05L20.32 294.73L20.30 294.40L20.32 294.07L20.45 293.75L20.99 293.52L21.53 293.36L21.70 293.14L21.80 292.91L21.89 292.67L21.93 292.40L21.66 291.90L21.44 291.36L21.57 291.05L21.79 290.79L22.05 290.57L22.36 290.44L22.90 290.66L23.40 290.93L23.67 290.89L23.91 290.80L24.14 290.70L24.36 290.53L24.52 289.99L24.75 289.45L25.07 289.32L25.40 289.30L25.73 289.32L26.05 289.45L26.28 289.99L26.44 290.53L26.66 290.70L26.89 290.80L27.13 290.89L27.40 290.93L27.90 290.66L28.44 290.44L28.75 290.57L29.01 290.79L29.23 291.05L29.36 291.36L29.14 291.90L28.87 292.40L28.91 292.67L29.00 292.91L29.10 293.14L29.27 293.36L29.81 293.52L30.35 293.75L30.48 294.07Z" fill="none" stroke="#4a4a4a" stroke-width="0.95" stroke-linejoin="round"/><circle cx="25.4" cy="294.4" r="1.8" fill="none" stroke="#4a4a4a" stroke-width="0.95"/><path d="M45.30 292.40v4.5a2.35 2.35 0 0 1 -4.7 0v-5.8a1.6 1.6 0 0 1 3.2 0v5.4a0.8 0.8 0 0 1 -1.6 0v-4.1" fill="none" stroke="#333" stroke-width="1.15" stroke-linecap="round"/><path d="M61.20 289.90H57.20a0.8 0.8 0 0 0 -0.8 0.8V298.20a0.8 0.8 0 0 0 0.8 0.8H63.50a0.8 0.8 0 0 0 0.8 -0.8V293.00ZM61.20 289.90V293.00H64.30" fill="none" stroke="#333" stroke-width="1.1" stroke-linejoin="round"/><path d="M23 330L27.5 333.9L23 337.8" fill="none" stroke="#4a4a4a" stroke-width="1.1" /><path d="M45.20 332.00v4.5a2.35 2.35 0 0 1 -4.7 0v-5.8a1.6 1.6 0 0 1 3.2 0v5.4a0.8 0.8 0 0 1 -1.6 0v-4.1" fill="none" stroke="#333" stroke-width="1.1" stroke-linecap="round"/><path d="M61.30 328.90H57.00a0.8 0.8 0 0 0 -0.8 0.8V337.60a0.8 0.8 0 0 0 0.8 0.8H63.50a0.8 0.8 0 0 0 0.8 -0.8V331.90ZM61.30 328.90V331.90H64.30" fill="none" stroke="#333" stroke-width="1.05" stroke-linejoin="round"/><path d="M45.20 353.00v4.5a2.35 2.35 0 0 1 -4.7 0v-5.8a1.6 1.6 0 0 1 3.2 0v5.4a0.8 0.8 0 0 1 -1.6 0v-4.1" fill="none" stroke="#333" stroke-width="1.1" stroke-linecap="round"/><path d="M61.30 349.90H57.00a0.8 0.8 0 0 0 -0.8 0.8V358.60a0.8 0.8 0 0 0 0.8 0.8H63.50a0.8 0.8 0 0 0 0.8 -0.8V352.90ZM61.30 349.90V352.90H64.30" fill="none" stroke="#333" stroke-width="1.05" stroke-linejoin="round"/><path d="M45.20 374.00v4.5a2.35 2.35 0 0 1 -4.7 0v-5.8a1.6 1.6 0 0 1 3.2 0v5.4a0.8 0.8 0 0 1 -1.6 0v-4.1" fill="none" stroke="#333" stroke-width="1.1" stroke-linecap="round"/><path d="M61.30 370.90H57.00a0.8 0.8 0 0 0 -0.8 0.8V379.60a0.8 0.8 0 0 0 0.8 0.8H63.50a0.8 0.8 0 0 0 0.8 -0.8V373.90ZM61.30 370.90V373.90H64.30" fill="none" stroke="#333" stroke-width="1.05" stroke-linejoin="round"/><path d="M45.20 395.00v4.5a2.35 2.35 0 0 1 -4.7 0v-5.8a1.6 1.6 0 0 1 3.2 0v5.4a0.8 0.8 0 0 1 -1.6 0v-4.1" fill="none" stroke="#333" stroke-width="1.1" stroke-linecap="round"/><path d="M61.30 391.90H57.00a0.8 0.8 0 0 0 -0.8 0.8V400.60a0.8 0.8 0 0 0 0.8 0.8H63.50a0.8 0.8 0 0 0 0.8 -0.8V394.90ZM61.30 391.90V394.90H64.30" fill="none" stroke="#333" stroke-width="1.05" stroke-linejoin="round"/><path d="M45.20 416.00v4.5a2.35 2.35 0 0 1 -4.7 0v-5.8a1.6 1.6 0 0 1 3.2 0v5.4a0.8 0.8 0 0 1 -1.6 0v-4.1" fill="none" stroke="#333" stroke-width="1.1" stroke-linecap="round"/><path d="M61.30 412.90H57.00a0.8 0.8 0 0 0 -0.8 0.8V421.60a0.8 0.8 0 0 0 0.8 0.8H63.50a0.8 0.8 0 0 0 0.8 -0.8V415.90ZM61.30 412.90V415.90H64.30" fill="none" stroke="#333" stroke-width="1.05" stroke-linejoin="round"/><path d="M45.20 437.00v4.5a2.35 2.35 0 0 1 -4.7 0v-5.8a1.6 1.6 0 0 1 3.2 0v5.4a0.8 0.8 0 0 1 -1.6 0v-4.1" fill="none" stroke="#333" stroke-width="1.1" stroke-linecap="round"/><path d="M61.30 433.90H57.00a0.8 0.8 0 0 0 -0.8 0.8V442.60a0.8 0.8 0 0 0 0.8 0.8H63.50a0.8 0.8 0 0 0 0.8 -0.8V436.90ZM61.30 433.90V436.90H64.30" fill="none" stroke="#333" stroke-width="1.05" stroke-linejoin="round"/></svg>

</body></html>
